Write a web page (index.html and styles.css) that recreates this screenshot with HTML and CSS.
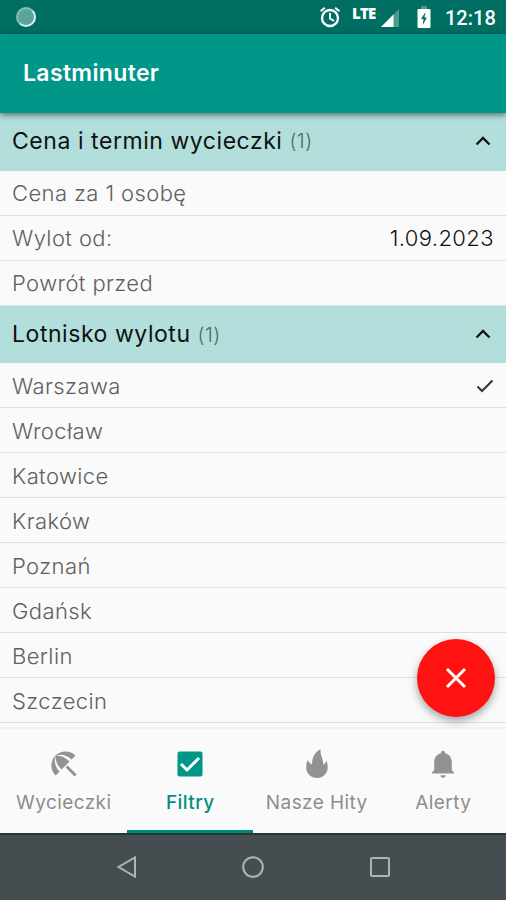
FILE: index.html
```html
<!DOCTYPE html>
<html lang="pl">
<head>
<meta charset="utf-8">
<title>Lastminuter</title>
<link rel="stylesheet" href="styles.css">
</head>
<body>
<div class="phone">
  <div class="status">
    <span class="spinner"></span>
    <svg class="alarm" viewBox="0 0 24 24" width="24" height="24"><circle cx="12" cy="13" r="8" fill="none" stroke="#fff" stroke-width="2.300"/><path d="M12 8v5.5l4 2.3M2.600 6.200l4.200-3.500M21.400 6.200l-4.200-3.500" fill="none" stroke="#fff" stroke-width="2"/></svg>
    <span class="lte">LTE</span>
    <svg class="signal" viewBox="0 0 18 18" width="18" height="18"><path d="M18 0v18H0z" fill="#4b9b91"/><path d="M12.500 5.500V18H0z" fill="#fff"/></svg>
    <svg class="battery" viewBox="0 0 14 22" width="14" height="22"><path d="M4 0h6v3H4z" fill="#4b9b91"/><path d="M1.500 3h11q1 0 1 1v17q0 1-1 1h-11q-1 0-1-1V4q0-1 1-1z" fill="#fff"/><path d="M8.500 6L4 13h2.500l-.8 6L10 11.500H7.500z" fill="#006e62"/></svg>
    <span class="time">12:18</span>
  </div>
  <header class="appbar"><h1>Lastminuter</h1></header>
  <main class="list">
    <div class="section first"><span class="name">Cena i termin wycieczki</span><span class="count">(1)</span><svg class="chevron" viewBox="0 0 16 10" width="16" height="10"><path d="M1.500 8.500L8 2l6.500 6.500"/></svg></div>
    <div class="row field"><span>Cena za 1 osobę</span></div>
    <div class="row field"><span>Wylot od:</span><span class="value">1.09.2023</span></div>
    <div class="row field last"><span>Powrót przed</span></div>
    <div class="section"><span class="name">Lotnisko wylotu</span><span class="count">(1)</span><svg class="chevron" viewBox="0 0 16 10" width="16" height="10"><path d="M1.500 8.500L8 2l6.500 6.500"/></svg></div>
    <div class="row"><span>Warszawa</span><svg class="check" viewBox="0 0 18 14" width="18" height="14"><path d="M1.500 7.500l4.500 4.500L16.500 1.500"/></svg></div>
    <div class="row"><span>Wrocław</span></div>
    <div class="row"><span>Katowice</span></div>
    <div class="row"><span>Kraków</span></div>
    <div class="row"><span>Poznań</span></div>
    <div class="row"><span>Gdańsk</span></div>
    <div class="row"><span>Berlin</span></div>
    <div class="row"><span>Szczecin</span></div>
  </main>
  <button class="fab" aria-label="Wyczyść"><svg viewBox="0 0 22 22" width="22" height="22"><path d="M2 2l18 18M20 2L2 20"/></svg></button>
  <nav class="tabs">
    <a class="tab"><svg viewBox="2 2 20 20" width="28" height="28"><path d="M13.127 14.560l1.430-1.430 6.440 6.443L19.570 21zm4.293-5.730l2.860-2.860c-3.950-3.950-10.350-3.960-14.300-.02 3.930-1.300 8.310-.25 11.440 2.880zM5.950 5.980c-3.940 3.950-3.930 10.350.02 14.300l2.860-2.860C5.700 14.290 4.650 9.910 5.950 5.980zm.02-.02l-.01.01c-.38 3.010 1.170 6.880 4.300 10.020l5.730-5.730c-3.130-3.130-7.010-4.680-10.020-4.300z"/></svg><span>Wycieczki</span></a>
    <a class="tab active"><svg viewBox="0 0 28 28" width="28" height="28"><rect x="1.500" y="1.500" width="25" height="25" rx="2"/><path d="M5 14l6 6L23 8" fill="none" stroke="#fff" stroke-width="3"/></svg><span>Filtry</span></a>
    <a class="tab"><svg viewBox="0 0 28 30" width="28" height="30"><path d="M17.500 0C12 3.500 9 8 9 15.500 7.300 14.500 5.500 13 4.700 11 3.600 13.500 3.200 16 3.200 18.500 3.200 24.800 8 29 14 29s10.700-4.300 10.700-10.500c0-2.600-.4-5-1.200-7-.6 2-1.700 3.500-3 4.300C20.500 10 17 7 17.500 0z"/></svg><span>Nasze Hity</span></a>
    <a class="tab"><svg viewBox="0 0 28 28" width="28" height="28"><path d="M14 .8a2 2 0 0 1 2 2v.4c4.300 1 6.800 4.500 6.800 8.800V20l2.200 2.400V23.500h-22v-1.100L5.200 20v-8c0-4.300 2.500-7.800 6.800-8.800v-.4a2 2 0 0 1 2-2zM11.500 25.200h5a2.500 2.500 0 0 1-5 0z"/></svg><span>Alerty</span></a>
  </nav>
  <footer class="system">
    <svg viewBox="0 0 22 24" width="22" height="24"><path d="M19 2.500v19L2.500 12z"/></svg>
    <svg viewBox="0 0 24 24" width="24" height="24"><circle cx="12" cy="12" r="9.800"/></svg>
    <svg viewBox="0 0 22 22" width="22" height="22"><rect x="2" y="2" width="18" height="18" rx="1"/></svg>
  </footer>
</div>
</body>
</html>
```
FILE: styles.css
```css
* { box-sizing: border-box; }
body { margin: 0; font-family: Inter, sans-serif; }
.phone { position: relative; width: 506px; height: 900px; display: flex; flex-direction: column; overflow: hidden; background: #fafafa; }
.status { height: 34px; flex: none; background: #006e62; display: flex; align-items: center; padding: 0 11px 0 16px; color: #fff; }
.spinner { width: 20px; height: 20px; border-radius: 50%; background: #5ba69c; border: 2px solid #88beb6; border-right-color: #e0f0ee; border-bottom-color: #e0f0ee; margin-right: auto; }
.alarm { margin-right: 10px; }
.lte { font: 800 15px/18px "Open Sans", sans-serif; letter-spacing: -.8px; width: 24px; margin: -9px 5px 0 0; }
.signal { margin: 2px 18px 0 0; }
.battery { margin: 0 14px 0 0; }
.time { font: 500 20px/24px Roboto, sans-serif; width: 50px; margin-top: 2px; text-align: right; white-space: nowrap; }
.appbar { position: relative; height: 79px; flex: none; background: #009688; padding: 24px 23px; box-shadow: 0 2px 6px rgba(0,0,0,.5); }
h1 { margin: 0; color: #fff; font-size: 23px; line-height: 30px; font-weight: 600; letter-spacing: .35px; }
.list { height: 616px; flex: none; }
.section { height: 57px; display: flex; align-items: center; padding: 0 15px 1px 12px; background: #b2dfdb; color: #111; font-size: 23px; }
.section.first { height: 58px; padding-bottom: 3px; }
.name { letter-spacing: .55px; }
.count { font-size: 20px; font-weight: 300; color: #536966; margin-left: 7px; padding-top: 1px; letter-spacing: .4px; }
.chevron, .check { margin-left: auto; fill: none; stroke: #111; stroke-width: 2.300; }
.row { height: 45px; display: flex; align-items: center; padding: 1px 12px 0; border-bottom: 1px solid #dedede; color: #606060; font-size: 22px; font-weight: 300; letter-spacing: .4px; }
.row.field { padding-top: 0; padding-bottom: 1px; }
.row.last { border-color: #d4e5e3; }
.value { margin-left: auto; color: #111; }
.check { stroke: #333; stroke-width: 2; }
.fab { position: absolute; z-index: 1; left: 417px; top: 639px; width: 78px; height: 78px; padding: 0; border: 0; border-radius: 50%; background: #ff1212; box-shadow: 0 4px 8px rgba(0,0,0,.35); display: grid; place-items: center; }
.fab path { stroke: #fff; stroke-width: 3; }
.tabs { position: relative; height: 104px; flex: none; display: grid; grid-template-columns: repeat(4, 1fr); background: #fafafa; box-shadow: 0 -1px 4px rgba(0,0,0,.06); z-index: 0; }
.tab { display: flex; flex-direction: column; align-items: center; padding: 20px 0 0 1px; color: #8d8d8d; font-size: 19px; }
.tab svg { height: 30px; fill: #929292; }
.tab span { margin-top: 12px; line-height: 24px; white-space: nowrap; letter-spacing: .42px; }
.tab.active { color: #009080; border-bottom: 3px solid #00897b; font-weight: 500; }
.tab.active svg { fill: #009688; }
.system { height: 67px; flex: none; display: grid; grid-template-columns: repeat(3, 126.500px); justify-content: center; justify-items: center; align-items: center; background: #464d51; border-top: 2px solid #213a36; padding-bottom: 2px; }
.system svg { fill: none; stroke: #aeb4b6; stroke-width: 2; }
```
